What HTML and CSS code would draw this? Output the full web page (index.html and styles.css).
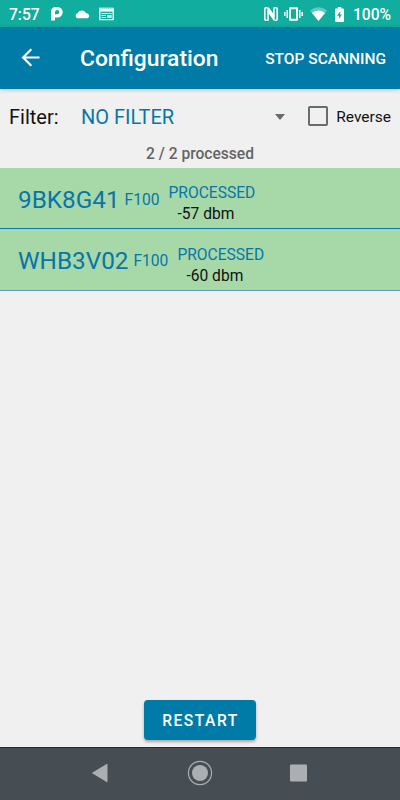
FILE: index.html
```
<!DOCTYPE html>
<html lang="en">
<head>
    <meta charset="UTF-8">
    <meta name="viewport" content="width=device-width, initial-scale=1.0">
    <title>Configuration</title>
    <link rel="stylesheet" href="styles.css">
</head>
<body>
    <!-- Status bar -->
    <div class="status-bar">
        <span class="clock">7:57</span>
        <svg class="icon-p" width="12" height="14" viewBox="0 0 12 14">
            <path d="M0 13.500V4.500Q0 0 5 0H6.500A5.200 5.200 0 0 1 6.500 10.500H4V13.500ZM4 7.300H6.200A2.100 2.100 0 0 0 6.200 3.100Q4 3.100 4 5.200Z" fill="#fff" fill-rule="evenodd"/>
        </svg>
        <svg class="icon-cloud" width="16" height="10" viewBox="0 0 16 10">
            <path d="M3 9.300A2.800 2.800 0 0 1 3.600 4.200A4.500 4.500 0 0 1 12 4.500A2.400 2.400 0 0 1 13.300 9.300Z" fill="#fff"/>
        </svg>
        <svg class="icon-news" width="15" height="14" viewBox="0 0 15 14">
            <path d="M.8 1.500V12.700H14.200V1.500" fill="none" stroke="#fff" stroke-width="1.300"/>
            <path d="M.3 1.200H14.700" stroke="#fff" stroke-width="1.600" stroke-dasharray="1.300 .7"/>
            <path d="M1 3.300H14" stroke="#fff" stroke-width="2.600"/>
            <path d="M2.500 6.500H12.700M2.500 8.500H7M2.500 10.500H7" stroke="#fff" stroke-width="1"/>
            <path d="M8.200 8H12.700V11H8.200Z" fill="#fff" opacity=".8"/>
        </svg>
        <div class="status-right">
            <svg width="14" height="14" viewBox="0 0 14 14">
                <path d="M3.300 .8H1.700Q.8 .8 .8 1.700V12.300Q.8 13.200 1.700 13.200H4.500M10.700 13.200H12.300Q13.200 13.200 13.200 12.300V1.700Q13.200 .8 12.300 .8H9.500" fill="none" stroke="#fff" stroke-width="1.600"/>
                <path d="M3.300 13.500V.5H5L9.200 6.500V1.200H10.700V13.500H9.500L4.800 6.500V13.500Z" fill="#fff"/>
            </svg>
            <svg class="icon-vibrate" width="19" height="14" viewBox="0 0 19 14">
                <path d="M6 1.300H13V12.700H6Z" fill="none" stroke="#fff" stroke-width="2" stroke-linejoin="round"/>
                <path d="M3.200 3V11M15.800 3V11M.8 5V9M18.200 5V9" stroke="#fff" stroke-width="1.500"/>
            </svg>
            <svg class="icon-wifi" width="17" height="14" viewBox="0 0 17 14">
                <path d="M0 3.500Q8.500 -3 17 3.500L8.500 14Z" fill="#fff" opacity=".35"/>
                <path d="M1.900 5.900Q8.500 .9 15.100 5.900L8.500 14Z" fill="#fff"/>
            </svg>
            <svg class="icon-battery" width="9" height="15" viewBox="0 0 9 15">
                <path d="M2.700 0H6.300V1.500H8Q9 1.500 9 2.500V14Q9 15 8 15H1Q0 15 0 14V2.500Q0 1.500 1 1.500H2.700Z" fill="#fff"/>
                <path d="M5.400 3.900L2 8.700H4.100L3.700 12.300L7 7.500H5Z" fill="#11ad9e"/>
            </svg>
            <span class="percent">100%</span>
        </div>
    </div>

    <!-- App bar -->
    <header class="app-bar">
        <svg width="20" height="20" viewBox="0 0 20 20">
            <path d="M19.500 9.500H3.300M11.300 1.300L3.100 9.500L11.300 17.700" fill="none" stroke="#fff" stroke-width="2.200"/>
        </svg>
        <h1>Configuration</h1>
        <span class="scan-action">STOP SCANNING</span>
    </header>

    <!-- Filter -->
    <div class="filter-row">
        <span class="filter-label">Filter:</span>
        <span class="filter-value">NO FILTER</span>
        <span class="caret"></span>
        <span class="checkbox"></span>
        <span class="reverse">Reverse</span>
    </div>
    <div class="summary">2 / 2 processed</div>

    <!-- Devices -->
    <div class="device">
        <span class="serial">9BK8G41</span>
        <span class="model">F100</span>
        <div class="state">
            <div class="state-name">PROCESSED</div>
            <div class="signal">-57 dbm</div>
        </div>
    </div>
    <div class="device device-last">
        <span class="serial">WHB3V02</span>
        <span class="model">F100</span>
        <div class="state">
            <div class="state-name">PROCESSED</div>
            <div class="signal">-60 dbm</div>
        </div>
    </div>

    <div class="footer">
        <button class="restart">RESTART</button>
    </div>

    <!-- Navigation bar -->
    <nav class="nav-bar">
        <svg width="216" height="26" viewBox="0 0 216 26">
            <path d="M.5 13L15 4.300V21.700Z" fill="#abafb2" stroke="#abafb2" stroke-linejoin="round"/>
            <circle cx="108" cy="13" r="11.600" fill="none" stroke="#abafb2" stroke-width="1.200"/>
            <circle cx="108" cy="13" r="8" fill="#abafb2"/>
            <rect x="198" y="4.500" width="17" height="17" rx="1" fill="#abafb2"/>
        </svg>
    </nav>
</body>
</html>
```

FILE: styles.css
```
* {
    box-sizing: border-box;
}

body {
    margin: 0;
    height: 800px;
    display: flex;
    flex-direction: column;
    background-color: #f0f0f0;
    color: #111;
    font-family: Roboto, "Liberation Sans", sans-serif;
    overflow: hidden;
}

svg {
    display: block;
    flex: none;
}

span, .state-name, .signal, h1 {
    white-space: nowrap;
}

/* Status bar */
.status-bar {
    height: 27px;
    flex: none;
    display: flex;
    align-items: center;
    padding: 1px 9px 0;
    background-color: #11ad9e;
    color: #fff;
    font-size: 15.6px;
    font-weight: 500;
}

.clock {
    width: 42px;
    padding-top: 1px;
}

.icon-cloud {
    margin-left: 11px;
}

.icon-news {
    margin-left: 9px;
}

.status-right {
    display: flex;
    align-items: center;
    margin-left: auto;
}

.icon-vibrate {
    margin-left: 6px;
}

.icon-wifi {
    margin-left: 7px;
}

.icon-battery {
    margin-left: 8px;
}

.percent {
    margin-left: 9px;
    padding-top: 1px;
}

/* App bar */
.app-bar {
    height: 62px;
    flex: none;
    display: flex;
    align-items: center;
    padding: 0 14px 0 20px;
    background-color: #007ba8;
    color: #fff;
    box-shadow: 0 1px 4px rgba(0, 0, 0, 0.2);
}

.app-bar h1 {
    margin: 1px 0 0 40px;
    font-size: 22.8px;
    font-weight: 500;
}

.scan-action {
    margin-left: auto;
    padding-top: 2px;
    font-size: 15.5px;
    font-weight: 500;
}

/* Filter */
.filter-row {
    height: 55px;
    flex: none;
    display: flex;
    align-items: center;
    padding: 0 9px;
}

.filter-label {
    width: 72px;
    font-size: 20px;
}

.filter-value {
    flex: 1;
    color: #0875a8;
    font-size: 20px;
}

.caret {
    border: 5.5px solid transparent;
    border-top: 6px solid #6b6b6b;
    border-bottom: 0;
}

.checkbox {
    width: 20px;
    height: 20px;
    margin: -2px 8px 0 23px;
    border: 2px solid #6b6b6b;
    border-radius: 2px;
}

.reverse {
    font-size: 15.5px;
}

.summary {
    height: 24px;
    flex: none;
    color: #646464;
    font-size: 15.6px;
    font-weight: 500;
    line-height: 20px;
    text-align: center;
}

/* Devices */
.device {
    height: 61px;
    flex: none;
    display: flex;
    align-items: center;
    padding: 2px 0 0 18px;
    background-color: #a6d8a8;
    border-bottom: 1px solid #0875a8;
    color: #0875a8;
}

.device-last {
    height: 62px;
    border-bottom-color: #5d96b4;
}

.serial {
    font-size: 24.3px;
}

.model {
    margin: 1px 9px 0 5px;
    font-size: 15.6px;
}

.state {
    padding-top: 10px;
    font-size: 15.6px;
    line-height: 21px;
}

.signal {
    padding-left: 9px;
    color: #111;
}

/* Restart */
.footer {
    margin-top: auto;
    height: 47px;
    display: flex;
    justify-content: center;
    align-items: flex-start;
}

.restart {
    width: 112px;
    height: 40px;
    padding: 2px 0 0 1px;
    border: none;
    border-radius: 4px;
    background-color: #007ba8;
    color: #fff;
    font-family: inherit;
    font-size: 15.6px;
    font-weight: 500;
    letter-spacing: 1.5px;
    box-shadow: 0 2px 3px rgba(0, 0, 0, 0.3);
}

/* Navigation bar */
.nav-bar {
    height: 53px;
    flex: none;
    display: flex;
    justify-content: center;
    align-items: center;
    padding-bottom: 2px;
    background-color: #464e53;
    border-top: 1px solid #1c3036;
}
```
